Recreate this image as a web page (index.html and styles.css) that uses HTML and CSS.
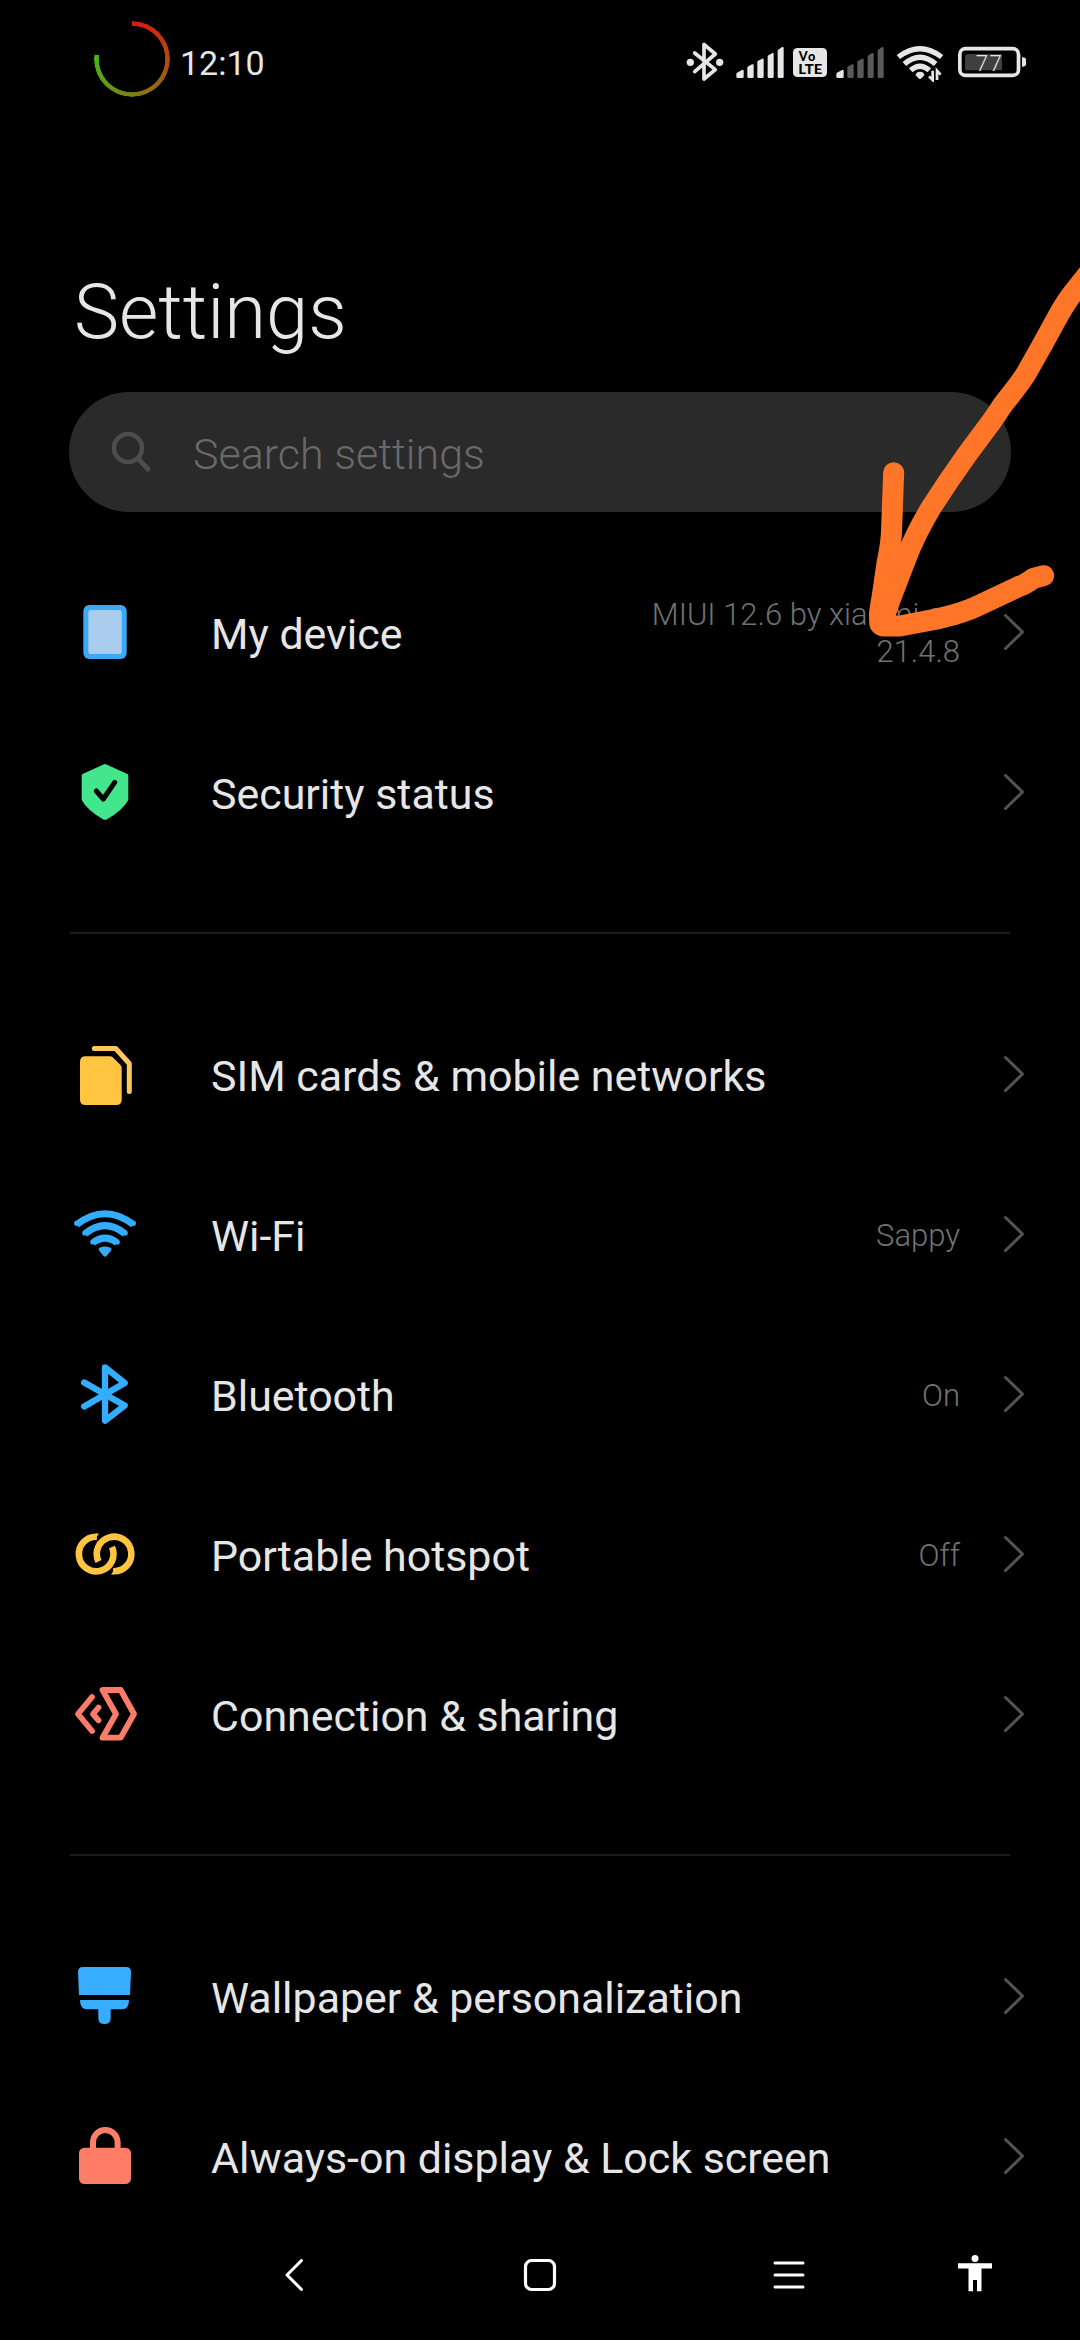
FILE: index.html
```html
<!DOCTYPE html>
<html lang="en">
<head>
    <meta charset="UTF-8">
    <meta name="viewport" content="width=device-width, initial-scale=1.0">
    <title>Settings</title>
    <link rel="stylesheet" href="styles.css">
</head>
<body>

    <svg class="defs" width="0" height="0">
        <symbol id="chevron" viewBox="0 0 24 40">
            <path d="M3.5 3.5 L20.5 20 L3.5 36.5" fill="none" stroke="#535353" stroke-width="3" stroke-linecap="round" stroke-linejoin="round"/>
        </symbol>
    </svg>

    <div class="phone">
        <header class="status-bar">
            <div class="ring"></div>
            <span class="clock">12:10</span>
            <div class="status-icons">
                <svg width="38" height="40" viewBox="48 66 114 120">
                    <path d="M74 99 L136 149 L102 177 V73 L136 102 L74 155" fill="none" stroke="#e6e6e6" stroke-width="11" stroke-linecap="round" stroke-linejoin="round"/>
                    <circle cx="61" cy="127" r="11" fill="#e6e6e6"/>
                    <circle cx="149" cy="127" r="11" fill="#e6e6e6"/>
                </svg>
                <svg class="signal" width="50" height="40" viewBox="195 66 150 120">
                    <g fill="#e6e6e6">
                        <path d="M201 158 L216 150 Q221 148 221 153 V170 Q221 174 217 174 H203 Q199 174 199 170 V161 Z"/>
                        <path d="M232 141 L246 133 Q251 131 251 136 V170 Q251 174 247 174 H236 Q232 174 232 170 Z"/>
                        <path d="M262 124 L276 116 Q281 115 281 119 V170 Q281 174 277 174 H266 Q262 174 262 170 Z"/>
                        <path d="M293 107 L307 99 Q311 98 311 102 V170 Q311 174 307 174 H297 Q293 174 293 170 Z"/>
                        <path d="M323 91 L336 81 Q341 80 341 84 V170 Q341 174 337 174 H327 Q323 174 323 170 Z"/>
                    </g>
                </svg>
                <svg class="volte" width="36" height="40" viewBox="366 66 108 120">
                    <rect x="369" y="84" width="102" height="87" rx="13" fill="#e6e6e6"/>
                    <text x="386" y="123" textLength="50">Vo</text>
                    <text x="385" y="161" textLength="72" lengthAdjust="spacingAndGlyphs">LTE</text>
                </svg>
                <svg width="50" height="40" viewBox="195 66 150 120">
                    <path fill="#e6e6e6" d="M201 158 L216 150 Q221 148 221 153 V170 Q221 174 217 174 H203 Q199 174 199 170 V161 Z"/>
                    <g fill="#5a5a5a">
                        <path d="M232 141 L246 133 Q251 131 251 136 V170 Q251 174 247 174 H236 Q232 174 232 170 Z"/>
                        <path d="M262 124 L276 116 Q281 115 281 119 V170 Q281 174 277 174 H266 Q262 174 262 170 Z"/>
                        <path d="M293 107 L307 99 Q311 98 311 102 V170 Q311 174 307 174 H297 Q293 174 293 170 Z"/>
                        <path d="M323 91 L336 81 Q341 80 341 84 V170 Q341 174 337 174 H327 Q323 174 323 170 Z"/>
                    </g>
                </svg>
                <svg class="wifi-status" width="50" height="40" viewBox="678 66 150 120">
                    <g fill="none" stroke="#e6e6e6" stroke-width="16">
                        <path d="M685 111 Q750 61 815 111"/>
                        <path d="M703 132 Q750 91 797 132"/>
                        <path d="M722 151 Q750 126 778 151"/>
                    </g>
                    <path d="M737 166 Q737 156 750 155 Q763 156 763 166 L753 176 Q750 178 747 176 Z" fill="#e6e6e6"/>
                    <path d="M788 152 V180 L777 169 M801 180 V152 L812 164" fill="none" stroke="#e6e6e6" stroke-width="8"/>
                </svg>
                <svg class="battery" width="71" height="40" viewBox="861 66 213 120">
                    <rect x="869.5" y="86" width="176" height="80" rx="17" fill="none" stroke="#e6e6e6" stroke-width="11"/>
                    <path d="M893 102 H996 V151 H893 Q885 151 885 143 V110 Q885 102 893 102 Z" fill="#3f3f3f"/>
                    <path d="M1056 112 Q1068 112 1068 119 V133 Q1068 140 1056 140 Z" fill="#e6e6e6"/>
                    <text x="917" y="152" textLength="79">77</text>
                </svg>
            </div>
        </header>

        <h1 class="title">Settings</h1>

        <div class="search">
            <svg width="44" height="44" viewBox="0 0 44 44">
                <circle cx="19" cy="18" r="14" fill="none" stroke="#4d4d4d" stroke-width="4.5"/>
                <path d="M29 28.5 L39 39" stroke="#4d4d4d" stroke-width="5" stroke-linecap="round"/>
            </svg>
            <span>Search settings</span>
        </div>

        <main class="list">
            <section class="group">
                <div class="row">
                    <svg class="icon" viewBox="0 0 70 70">
                        <rect x="13.3" y="8" width="43.4" height="54" rx="6" fill="#3ba9f5"/>
                        <rect x="18.3" y="13" width="33.4" height="44" rx="2.5" fill="#aacdee"/>
                    </svg>
                    <span class="label">My device</span>
                    <span class="value">MIUI 12.6 by xiaomi.eu<br>21.4.8</span>
                    <svg class="chevron"><use href="#chevron"/></svg>
                </div>
                <div class="row">
                    <svg class="icon" viewBox="0 0 70 70">
                        <path d="M33.5 7.4 Q35 6.7 36.5 7.4 L57.4 17 Q58.3 17.4 58.3 18.5 V43 Q53 53 37 62.3 Q35 63.4 33 62.3 Q17 53 11.7 43 V18.5 Q11.7 17.4 12.6 17 Z" fill="#43e68d"/>
                        <path d="M26.3 34 L33.3 42 L44.7 25.3" fill="none" stroke="#000" stroke-width="5" stroke-linecap="round" stroke-linejoin="round"/>
                    </svg>
                    <span class="label">Security status</span>
                    <svg class="chevron"><use href="#chevron"/></svg>
                </div>
            </section>

            <section class="group">
                <div class="row">
                    <svg class="icon" viewBox="0 0 70 70">
                        <path d="M15.5 17.3 H40 Q41.7 17.3 43 18.5 L50.5 26 Q51.7 27.3 51.7 29 V60.5 Q51.7 66 46.2 66 H15.5 Q10 66 10 60.5 V22.8 Q10 17.3 15.5 17.3 Z" fill="#ffc540"/>
                        <path d="M24.3 9.5 H45.7 L59.3 24.5 V52.5" fill="none" stroke="#ffc85a" stroke-width="5" stroke-linecap="round" stroke-linejoin="round"/>
                    </svg>
                    <span class="label">SIM cards &amp; mobile networks</span>
                    <svg class="chevron"><use href="#chevron"/></svg>
                </div>
                <div class="row">
                    <svg class="icon" viewBox="0 0 70 70">
                        <g fill="none" stroke="#33adff" stroke-width="7">
                            <path d="M6.7 25.5 Q35 4 63.3 25.5"/>
                            <path d="M15 34.7 Q35 18.7 55 34.7"/>
                            <path d="M23 43.7 Q35 34.6 47 43.7"/>
                        </g>
                        <!-- rounded ends of the arcs -->
                        <g fill="#33adff">
                            <circle cx="6.7" cy="24.3" r="2.6"/>
                            <circle cx="63.3" cy="24.3" r="2.6"/>
                            <circle cx="14.8" cy="34" r="2.6"/>
                            <circle cx="55.2" cy="34" r="2.6"/>
                            <circle cx="22.8" cy="43" r="2.6"/>
                            <circle cx="47.2" cy="43" r="2.6"/>
                        </g>
                        <path d="M29.5 52 Q27.6 50 30 48.6 Q35 46.4 40 48.6 Q42.6 50 40.6 52 L36.5 57 Q35 58.5 33.5 57 Z" fill="#33adff"/>
                    </svg>
                    <span class="label">Wi-Fi</span>
                    <span class="value">Sappy</span>
                    <svg class="chevron"><use href="#chevron"/></svg>
                </div>
                <div class="row">
                    <svg class="icon" viewBox="0 0 70 70">
                        <path d="M14.2 23.5 L54.7 46.5 L35 61.7 V8.3 L54.7 24 L14.2 47.5" fill="none" stroke="#33adff" stroke-width="6.3" stroke-linecap="round" stroke-linejoin="round"/>
                    </svg>
                    <span class="label">Bluetooth</span>
                    <span class="value">On</span>
                    <svg class="chevron"><use href="#chevron"/></svg>
                </div>
                <div class="row">
                    <svg class="icon" viewBox="0 0 70 70">
                        <g fill="none" stroke="#ffc540" stroke-width="6.6">
                            <path d="M27 17.7 A17.3 17.3 0 1 0 42 28"/>
                            <path d="M43 52.2 A17.3 17.3 0 1 0 28.5 42.5"/>
                        </g>
                        <path d="M26.5 14.4 H29 L24.5 21 Z M43.5 55.6 H41 L45.5 49 Z" fill="#ffc540"/>
                    </svg>
                    <span class="label">Portable hotspot</span>
                    <span class="value">Off</span>
                    <svg class="chevron"><use href="#chevron"/></svg>
                </div>
                <div class="row">
                    <svg class="icon" viewBox="0 0 70 70">
                        <g fill="none" stroke="#fb7d69" stroke-width="5.8" stroke-linecap="round" stroke-linejoin="round">
                            <path d="M22 18 L8 35 L22 52"/>
                            <path d="M28.5 28.5 L23 35 L28.5 41.3"/>
                            <path d="M32.5 11 H50.7 L64 35 L50.7 58.7 H32.5 L46 35 Z"/>
                        </g>
                    </svg>
                    <span class="label">Connection &amp; sharing</span>
                    <svg class="chevron"><use href="#chevron"/></svg>
                </div>
            </section>

            <section class="group">
                <div class="row">
                    <svg class="icon" viewBox="0 0 70 70">
                        <path d="M13 6 H56 Q61 6 61 11 L60 34 H9 L8 11 Q8 6 13 6 Z" fill="#36adff"/>
                        <path d="M10 39 H59 Q59 48.3 52 48.3 H40.7 V57 Q40.7 63 34.5 63 Q28.3 63 28.3 57 V48.3 H17 Q10 48.3 10 39 Z" fill="#36adff"/>
                    </svg>
                    <span class="label">Wallpaper &amp; personalization</span>
                    <svg class="chevron"><use href="#chevron"/></svg>
                </div>
                <div class="row">
                    <svg class="icon" viewBox="0 0 70 70">
                        <path d="M23 30 V21.3 A12.3 12.3 0 0 1 47.6 21.3 V30" fill="none" stroke="#fd7f69" stroke-width="6"/>
                        <rect x="9" y="26.7" width="52" height="36.3" rx="5.5" fill="#fe7d66"/>
                    </svg>
                    <span class="label">Always-on display &amp; Lock screen</span>
                    <svg class="chevron"><use href="#chevron"/></svg>
                </div>
            </section>
        </main>

        <nav class="nav-bar">
            <svg class="nav-back" width="40" height="40" viewBox="0 0 40 40">
                <path d="M27.5 5.5 L13 20 L27.5 34.5" fill="none" stroke="#fff" stroke-width="3" stroke-linecap="round" stroke-linejoin="round"/>
            </svg>
            <svg class="nav-home" width="40" height="40" viewBox="0 0 40 40">
                <rect x="5.5" y="5.5" width="29" height="29" rx="6" fill="none" stroke="#fff" stroke-width="3.2"/>
            </svg>
            <svg class="nav-menu" width="40" height="40" viewBox="0 0 40 40">
                <path d="M6 8 H34 M6 20 H34 M6 32 H34" stroke="#fff" stroke-width="3" stroke-linecap="round"/>
            </svg>
            <svg width="40" height="40" viewBox="0 0 40 40">
                <circle cx="20" cy="3.5" r="3.5" fill="#fff"/>
                <path d="M3 8.3 H37 V13.5 H26.5 V36.2 H22 V25 H18 V36.2 H13.5 V13.5 H3 Z" fill="#fff"/>
            </svg>
        </nav>

        <!-- hand-drawn arrow pointing at the ROM version -->
        <svg class="arrow" viewBox="0 0 1380 1380">
            <g fill="none" stroke="#ff7629" stroke-width="63" stroke-linecap="round" stroke-linejoin="round">
                <path d="M1420 82 L1352 168 Q1330 198 1305 245 L1265 318 L1220 398 Q1205 424 1150 492 L1118 540 L1040 645 Q985 722 930 808 Q885 885 862 945 L810 1080 L784 1155"/>
                <path d="M821 698 L815 860 Q815 905 801 970 L788 1060 L779 1115 V1145 Q779 1158 792 1158 H840 L960 1135 Q1035 1117 1075 1097 L1195 1040 Q1215 1034 1240 1015 L1271 1007"/>
            </g>
        </svg>
    </div>

</body>
</html>
```
FILE: styles.css
```css
* {
    box-sizing: border-box;
}
body {
    margin: 0;
    background: #000;
    color: #e6e6e6;
    font-family: Roboto, "Liberation Sans", sans-serif;
}
.defs {
    position: absolute;
}
.phone {
    position: relative;
    width: 1080px;
    height: 2340px;
    overflow: hidden;
    background: #000;
    display: flex;
    flex-direction: column;
}

/* status bar */
.status-bar {
    display: flex;
    align-items: center;
    height: 124px;
    padding: 0 52px 0 94px;
}
.ring {
    width: 76px;
    height: 76px;
    margin-top: -6px;
    border-radius: 50%;
    background: conic-gradient(#e4140f, #46ba14 277deg, transparent 277deg);
    -webkit-mask: radial-gradient(circle, transparent 32.8px, #000 33.6px);
    mask: radial-gradient(circle, transparent 32.8px, #000 33.6px);
}
.clock {
    margin-left: 10px;
    padding-top: 2px;
    font-size: 34px;
}
.status-icons {
    display: flex;
    margin-left: auto;
    gap: 7px;
}
.signal {
    margin-left: 4px;
}
.wifi-status, .battery {
    margin-left: 4px;
}
.volte text {
    font-family: Lato, sans-serif;
    font-size: 38px;
    font-weight: 900;
    fill: #000;
}
.battery text {
    font-size: 67px;
    font-weight: 300;
    fill: #e6e6e6;
}

/* header */
.title {
    margin: 0;
    height: 268px;
    padding: 143px 0 0 74px;
    font-size: 76px;
    line-height: 90px;
    font-weight: 300;
}
.search {
    display: flex;
    align-items: center;
    flex: none;
    width: 942px;
    height: 120px;
    margin-left: 69px;
    padding-left: 40px;
    border-radius: 60px;
    background: #2a2a2a;
    color: #696969;
    font-size: 43px;
    font-weight: 300;
}
.search span {
    margin-left: 40px;
    padding-top: 3px;
}

/* settings list */
.list {
    flex: 1;
    padding-top: 40px;
}
.group + .group::before {
    content: "";
    display: block;
    height: 2px;
    margin: 60px 70px;
    background: #1c1c1c;
}
.row {
    display: flex;
    align-items: center;
    height: 160px;
    padding: 0 54px 0 70px;
}
.icon {
    width: 70px;
    height: 70px;
}
.label {
    margin-left: 71px;
    padding-top: 4px;
    font-size: 42.9px;
}
.value {
    margin-left: auto;
    padding-top: 2px;
    color: #727272;
    font-size: 31px;
    font-weight: 300;
    line-height: 37px;
    text-align: right;
}
.chevron {
    width: 24px;
    height: 40px;
    margin-left: auto;
}
.value + .chevron {
    margin-left: 42px;
}

/* navigation buttons */
.nav-bar {
    display: flex;
    height: 104px;
    padding: 19px 0 0 274px;
}
.nav-back {
    margin-right: 206px;
}
.nav-home {
    margin-right: 209px;
}
.nav-menu {
    margin-right: 146px;
}

.arrow {
    position: absolute;
    left: 620px;
    top: 240px;
    width: 460px;
    height: 460px;
}
```
